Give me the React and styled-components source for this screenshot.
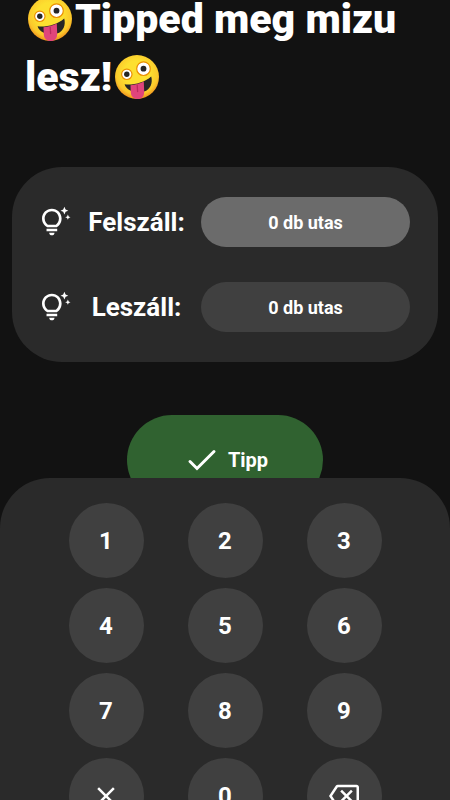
import React, { useState } from 'react';
import styled, { createGlobalStyle } from 'styled-components';
import { MdClose, MdOutlineBackspace } from 'react-icons/md';


const color = {
  page: '#121212',
  panel: '#2a2a2a',
  key: '#404040',
  active: '#6b6b6b',
  green: '#306230',
}

const fields = [
  { name: 'on', label: 'Felszáll:' },
  { name: 'off', label: 'Leszáll:' },
];

const digits = ['1', '2', '3', '4', '5', '6', '7', '8', '9'];


function ZanyFace(){
  return(
    <Face viewBox="0 0 50 50" role="img" aria-label="🤪">
      <defs>
        <radialGradient id="zany-skin" cx="0.5" cy="0.42" r="0.58">
          <stop offset="0.5" stopColor="#fde030" />
          <stop offset="0.82" stopColor="#fbc92b" />
          <stop offset="1" stopColor="#f08f1c" />
        </radialGradient>
      </defs>
      <circle cx="25" cy="25" r="22" fill="url(#zany-skin)" />
      <circle cx="14.8" cy="22.3" r="5.2" fill="#fff" stroke="#eb8f00" strokeWidth="1.2" />
      <circle cx="14.8" cy="22.3" r="2.7" fill="#262626" />
      <circle cx="31.5" cy="16.7" r="6.8" fill="#fff" stroke="#eb8f00" strokeWidth="1.2" />
      <circle cx="31.5" cy="16.7" r="2.9" fill="#262626" />
      <path d="M12.6 32.3 C21 33.4 32 30.6 39.2 24.4 C41 30.5 38.5 37.6 32 39.6 C25 41.7 14.6 39.5 12.6 32.3 Z" fill="#262626" />
      <path d="M18.5 33.2 C23 32.8 27.6 31.4 31.8 29.4 L32.2 40 C32.2 44.5 29.5 47 25.8 47 C21.8 47 19 44.5 18.8 40.5 Z" fill="#e0457b" />
      <path d="M25.2 33 L25.6 39.5" stroke="#ba2c5e" strokeWidth="1.3" strokeLinecap="round" />
    </Face>
  )
}

function BulbIcon(){
  return(
    <svg width="32" height="32" viewBox="0 0 24 24" fill="#fff" aria-hidden="true">
      <path
        fillRule="evenodd"
        d="M16.2 9.4c0 3.8-2.5 5.9-3.6 6.6H5.4C4.3 15.3 1.5 13.2 1.5 9.4 1.5 5.3 4.8 2.1 8.9 2.1s7.3 3.2 7.3 7.3zm-2 0c0-3-2.3-5.4-5.3-5.4S3.5 6.4 3.5 9.4c0 2.5 1.5 3.9 2.4 4.6h6c.8-.7 2.3-2.1 2.3-4.6z"
      />
      <path d="M4.9 17h8v2h-8zM6.9 20h4c0 1.1-.9 2-2 2s-2-.9-2-2z" />
      <path d="M18.3 6.4l.9-2 2-.9-2-.9-.9-2-.9 2-2 .9 2 .9zM20.9 10.4l.6-1.4 1.4-.6-1.4-.6-.6-1.4-.6 1.4-1.4.6 1.4.6z" />
    </svg>
  )
}

export default function App(){
  const [active, setActive] = useState('on');
  const [values, setValues] = useState({ on: 0, off: 0 });

  function setValue(next){
    setValues({ ...values, [active]: next });
  }

  function onClickDigit(digit){
    setValue(Number(`${ values[active] }${ digit }`));
  }

  return(
    <Page>
      <GlobalStyle />
      <Title><ZanyFace />Tipped meg mizu lesz!<ZanyFace /></Title>
      <Card>
        { fields.map(({ name, label }) => (
          <Row key={ name }>
            <BulbIcon />
            <Label htmlFor={ name }>{ label }</Label>
            <Amount
              id={ name }
              readOnly
              $active={ active === name }
              value={ `${ values[name] } db utas` }
              onFocus={ () => setActive(name) }
            />
          </Row>
        )) }
      </Card>
      <TippButton type="button">
        <svg width="30" height="24" viewBox="0 0 30 24" fill="none" aria-hidden="true">
          <path d="M3 13.5 L10 20.5 L27 3.5" stroke="#fff" strokeWidth="3" strokeLinecap="round" />
        </svg>
        Tipp
      </TippButton>
      <Keypad>
        { digits.map(digit => (
          <Key key={ digit } type="button" onClick={ () => onClickDigit(digit) }>{ digit }</Key>
        )) }
        <Key type="button" aria-label="Törlés" onClick={ () => setValue(0) }>
          <MdClose size={ 30 } />
        </Key>
        <Key type="button" onClick={ () => onClickDigit('0') }>0</Key>
        <Key type="button" aria-label="Vissza" onClick={ () => setValue(Math.floor(values[active] / 10)) }>
          <MdOutlineBackspace size={ 30 } />
        </Key>
      </Keypad>
    </Page>
  )
}


const GlobalStyle = createGlobalStyle`
  *{
    box-sizing: border-box;
  }

  body{
    margin: 0;
    background: ${ color.page };
  }

  body, button, input{
    font-family: Roboto, "Liberation Sans", sans-serif;
    font-weight: 700;
    color: white;
  }
`;

const Page = styled.main`
  display: flex;
  flex-direction: column;
  height: 100vh;
  overflow-y: auto;
  scrollbar-width: none;

  > *{
    flex-shrink: 0;
  }
`;

const Title = styled.h1`
  margin: -10px 25px 61px;
  font-size: 41px;
  font-weight: 900;
  line-height: 58px;
`;

const Face = styled.svg`
  width: 50px;
  height: 50px;
  vertical-align: -11px;
`;

const Card = styled.section`
  display: flex;
  flex-direction: column;
  gap: 35px;
  margin: 0 12px;
  padding: 30px 28px;
  border-radius: 50px;
  background: ${ color.panel };
`;

const Row = styled.div`
  display: grid;
  grid-template-columns: 32px 129px 1fr;
  align-items: center;
`;

const Label = styled.label`
  font-size: 26px;
  text-align: center;
`;

const Amount = styled.input`
  width: 100%;
  height: 50px;
  padding: 0;
  border: 0;
  border-radius: 25px;
  outline: 0;
  background: ${ ({ $active }) => $active ? color.active : color.key };
  font-size: 18px;
  text-align: center;
  cursor: pointer;
`;

const TippButton = styled.button`
  display: flex;
  align-items: center;
  align-self: center;
  gap: 11px;
  height: 90px;
  margin-top: 53px;
  padding: 0 55px 0 60px;
  border: 0;
  border-radius: 45px;
  background: ${ color.green };
  font-size: 20px;
  cursor: pointer;
`;

const Keypad = styled.section`
  display: grid;
  grid-template-columns: repeat(3, 75px);
  justify-content: center;
  gap: 10px 44px;
  position: relative;
  margin-top: -27px;
  padding: 25px 0;
  border-radius: 50px 50px 0 0;
  background: ${ color.panel };
`;

const Key = styled.button`
  display: flex;
  align-items: center;
  justify-content: center;
  height: 75px;
  padding: 0;
  border: 0;
  border-radius: 50%;
  background: ${ color.key };
  font-size: 24px;
  cursor: pointer;
`;
